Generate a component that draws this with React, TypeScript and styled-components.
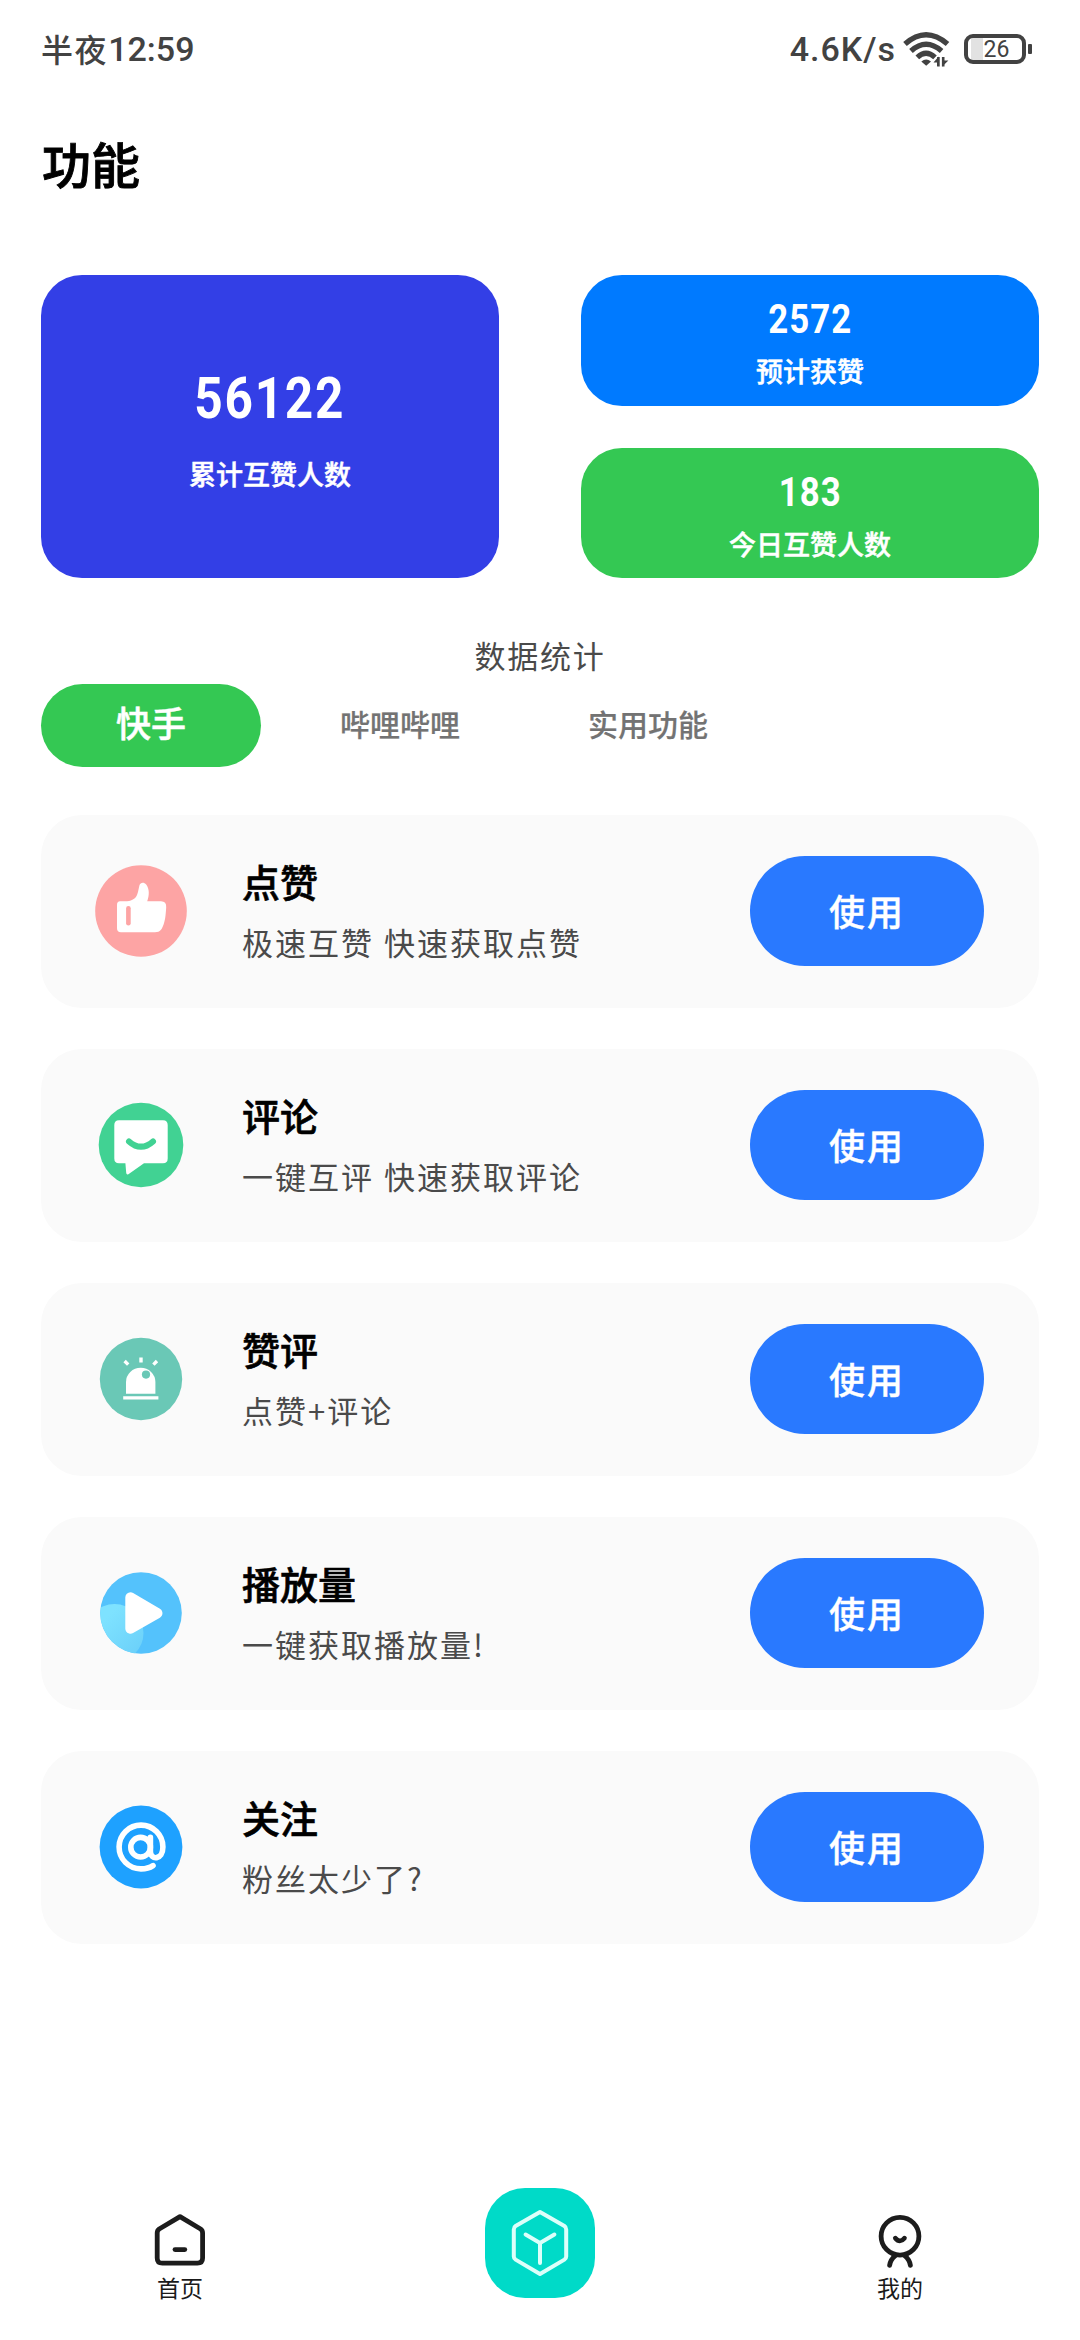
import React from "react";
import styled, { createGlobalStyle } from "styled-components";

const GlobalStyle = createGlobalStyle`
  *, *::before, *::after { box-sizing: border-box; }
  body {
    margin: 0;
    background: #ffffff;
    font-family: "Noto Sans CJK SC", "Noto Sans", sans-serif;
  }
`;

const Screen = styled.main`
  display: flex;
  flex-direction: column;
  width: 1080px;
  height: 2340px;
  overflow: hidden;
  background: #fff;
`;

const StatusBar = styled.header`
  display: flex;
  justify-content: space-between;
  align-items: center;
  height: 98px;
  padding: 0 48px 0 41px;
  color: #424242;
`;

const Clock = styled.div`
  display: flex;
  align-items: center;
  font-size: 32px;
  font-weight: 500;
  line-height: 48px;
  letter-spacing: 1.6px;
`;

const Period = styled.span`
  padding-bottom: 3px;
`;

const Latin = styled.span<{ $size: number; $spacing?: number }>`
  font-family: Roboto, "Noto Sans", sans-serif;
  font-weight: 500;
  font-size: ${(p) => p.$size}px;
  letter-spacing: ${(p) => p.$spacing ?? 0}px;
`;

const StatusIcons = styled.div`
  display: flex;
  align-items: center;
`;

const WifiSvg = styled.svg`
  margin-left: 7px;
`;

const Battery = styled.div`
  display: flex;
  align-items: center;
  margin-left: 14px;
`;

const BatteryBody = styled.div`
  display: flex;
  align-items: center;
  justify-content: center;
  width: 62px;
  height: 30px;
  padding: 1px 0 0 3px;
  border: 4px solid #424242;
  border-radius: 9px;
  background: linear-gradient(90deg, #fff 3px, #e2e2e2 3px, #e2e2e2 15px, #fff 15px);
  font: 400 23px/22px Roboto, "Noto Sans", sans-serif;
`;

const BatteryTip = styled.div`
  width: 4px;
  height: 10px;
  margin-left: 2px;
  border-radius: 1px;
  background: #424242;
`;

const PageTitle = styled.h1`
  margin: 29px 0 0 42px;
  height: 72px;
  font-size: 49px;
  line-height: 72px;
  font-weight: 500;
  -webkit-text-stroke: 0.9px #000;
  color: #000;
`;

const Stats = styled.section`
  display: grid;
  grid-template-columns: 458px 458px;
  grid-template-rows: 131px 130px;
  gap: 42px 82px;
  margin: 76px 41px 0;
`;

const StatCard = styled.div<{ $color: string; $large?: boolean }>`
  display: flex;
  flex-direction: column;
  align-items: center;
  grid-row: ${(p) => (p.$large ? "span 2" : "auto")};
  padding-top: ${(p) => (p.$large ? 93 : 24)}px;
  border-radius: 41px;
  background: ${(p) => p.$color};
  color: #fff;
`;

const StatValue = styled.div<{ $large?: boolean }>`
  height: ${(p) => (p.$large ? 62 : 42)}px;
  font-family: Roboto, "Noto Sans", sans-serif;
  font-weight: 700;
  font-size: ${(p) => (p.$large ? 57 : 40)}px;
  line-height: ${(p) => (p.$large ? 62 : 42)}px;
  letter-spacing: ${(p) => (p.$large ? 2 : 1.2)}px;
  transform: scaleX(0.87);
`;

const StatLabel = styled.div<{ $large?: boolean }>`
  margin-top: ${(p) => (p.$large ? 24 : 10)}px;
  font-size: 27px;
  line-height: 40px;
  font-weight: 500;
  -webkit-text-stroke: 0.5px #fff;
`;

const SectionCaption = styled.p`
  margin: 54px 0 0;
  height: 46px;
  text-align: center;
  font-size: 31px;
  line-height: 46px;
  letter-spacing: 1.7px;
  color: #4a4a4a;
`;

const Tabs = styled.nav`
  display: flex;
  align-items: center;
  height: 83px;
  margin: 6px 0 0 41px;
`;

const Tab = styled.button<{ $active?: boolean }>`
  width: ${(p) => (p.$active ? 220 : 248)}px;
  height: 83px;
  padding: 0 0 ${(p) => (p.$active ? 8 : 6)}px;
  border: 0;
  border-radius: 42px;
  background: ${(p) => (p.$active ? "#34c853" : "transparent")};
  color: ${(p) => (p.$active ? "#fff" : "#737373")};
  font-family: inherit;
  font-weight: 500;
  font-size: ${(p) => (p.$active ? 35 : 30)}px;
  -webkit-text-stroke: ${(p) => (p.$active ? "0.5px" : "0.2px")} currentColor;
  &:nth-child(2) { margin-left: 15px; }
`;

const List = styled.section`
  display: flex;
  flex-direction: column;
  gap: 41px;
  margin: 48px 41px 0;
`;

const Row = styled.article`
  display: flex;
  align-items: center;
  height: 193px;
  padding: 0 55px 1px 54px;
  border-radius: 41px;
  background: #fafafa;
`;

const RowText = styled.div`
  flex: 1;
  margin-left: 55px;
  padding-bottom: 4px;
`;

const RowTitle = styled.h2`
  margin: 0;
  font-size: 38px;
  line-height: 56px;
  font-weight: 500;
  -webkit-text-stroke: 0.6px #000;
  color: #000;
`;

const RowSubtitle = styled.p`
  margin: 10px 0 0;
  font-size: 31px;
  line-height: 46px;
  letter-spacing: 2px;
  word-spacing: 1px;
  color: #4a4a4a;
`;

const UseButton = styled.button`
  width: 234px;
  height: 110px;
  padding: 0 0 2px;
  border: 0;
  border-radius: 55px;
  background: #2979ff;
  color: #fff;
  font-family: inherit;
  font-size: 36px;
  font-weight: 500;
  letter-spacing: 2px;
  -webkit-text-stroke: 0.4px #fff;
`;

const BottomNav = styled.footer`
  display: grid;
  grid-template-columns: 360px 360px 360px;
  justify-items: center;
  align-items: start;
  margin-top: auto;
  height: 152px;
`;

const NavItem = styled.div`
  display: flex;
  flex-direction: column;
  align-items: center;
  gap: 2px;
  padding-top: 24px;
  font-size: 23px;
  line-height: 34px;
  color: #1a1a1a;
`;

const NavCenter = styled.div`
  display: flex;
  align-items: center;
  justify-content: center;
  width: 110px;
  height: 110px;
  border-radius: 40px;
  background: #00dac8;
`;

const IconCanvas = ({ children }: { children: React.ReactNode }) => (
  <svg width="92" height="92" viewBox="-46 -46 92 92">
    {children}
  </svg>
);

const LikeIcon = () => (
  <IconCanvas>
    <circle r="45.8" fill="#fda4a4" />
    <path
      d="M-21-9.7H-14C-8-10.5-5.5-12.5-3.8-16.5C-2.5-20-2.4-22.5-1.6-25.5C-.6-29 3-29.3 5.2-26.4C8.6-22 8.4-15.5 6.2-9.7H20Q25.6-9.7 25.2-3.5C24.6 4 24.5 8 22.6 13.5C21 18 19.5 21.2 14 21.2H-20Q-24 21.2-24 17.2V-6Q-24-9.7-21-9.7Z"
      fill="#fff"
    />
    <path d="M-12.6-2.8V12.2" stroke="#fda4a4" strokeWidth="4.6" strokeLinecap="round" />
  </IconCanvas>
);

const CommentIcon = () => (
  <IconCanvas>
    <circle r="42.3" fill="#41d293" />
    <path
      d="M-22-24.7H22Q26.7-24.7 26.7-20V13.6Q26.7 18.3 22 18.3H3L-12.6 29.2Q-14.6 30-14.8 27.8L-15.6 18.3H-22Q-26.7 18.3-26.7 13.6V-20Q-26.7-24.7-22-24.7Z"
      fill="#fff"
    />
    <path d="M-12-3.6Q0 7 12-3.6" fill="none" stroke="#41d293" strokeWidth="6" strokeLinecap="round" />
  </IconCanvas>
);

const AlarmIcon = () => (
  <IconCanvas>
    <circle r="41.2" fill="#6ac8b6" />
    <path d="M-15 14.8V3A14.7 14.3 0 0 1 14.4 3V14.8Z" fill="#fff" />
    <circle cx="5" cy="-4.4" r="4.1" fill="#6ac8b6" />
    <path d="M-17.8 18.9H17.4" stroke="#fff" strokeWidth="3.2" />
    <path d="M-16.4-18L-12.8-14.4M0-21.6V-16.6M16-18L12.4-14.4" stroke="#fff" strokeWidth="3.4" />
  </IconCanvas>
);

const PlayIcon = () => (
  <IconCanvas>
    <defs>
      <clipPath id="playDisc">
        <circle r="40.8" />
      </clipPath>
      <linearGradient id="playGlow" x1="0" y1="0" x2="1" y2="1">
        <stop offset="0.3" stopColor="#7ee2ff" />
        <stop offset="1" stopColor="#68cdf8" />
      </linearGradient>
    </defs>
    <circle r="40.8" fill="#54c2fc" />
    <circle cx="-26.5" cy="20" r="29" fill="url(#playGlow)" clipPath="url(#playDisc)" />
    <path
      d="M-10.5-15.5L16.3.2L-10.5 15.6Z"
      fill="#fff"
      stroke="#fff"
      strokeWidth="10.4"
      strokeLinejoin="round"
    />
  </IconCanvas>
);

const FollowIcon = () => (
  <IconCanvas>
    <circle r="41.4" fill="#1ea1ff" />
    <g fill="none" stroke="#fff" strokeWidth="5.6" strokeLinecap="round" strokeLinejoin="round">
      <circle cx="-.4" cy=".2" r="9.8" />
      <path d="M9.4-9.6V4.6C9.4 13.4 21.9 13.4 21.9 0A21.9 21.9 0 1 0-.2 21.9Q7 22 12 18.6" />
    </g>
  </IconCanvas>
);

const WifiIcon = () => (
  <WifiSvg width="47" height="36" viewBox="0 0 47 36" fill="none" stroke="#424242">
    <path d="M2 13Q23-5.5 44.5 13" strokeWidth="5.4" />
    <path d="M8 20Q23 6.5 38.6 20" strokeWidth="5.4" />
    <path d="M14.3 26.4Q23 18 32 26.4" strokeWidth="5.2" />
    <path d="M18.3 30.4Q23.2 26.4 28 30.4L23.2 34.8Z" fill="#424242" stroke="none" />
    <path d="M35.6 25.5V35H34V31.5H30.5ZM39.2 35.5V26H40.8V29.4H45.4Z" fill="#424242" stroke="none" />
    <path d="M35.4 26V35.6M40.2 26V35.6" strokeWidth="2.6" />
  </WifiSvg>
);

const HomeIcon = () => (
  <svg width="56" height="56" viewBox="0 0 56 56" fill="none" stroke="#1c1c1c" strokeWidth="4.8" strokeLinecap="round" strokeLinejoin="round">
    <path d="M28 4.6L48.6 17Q50.6 18.4 50.6 21V46Q50.6 51.2 45.4 51.2H10.4Q5.2 51.2 5.2 46V21Q5.2 18.4 7.2 17Z" />
    <path d="M23 37.6H32.8" />
  </svg>
);

const ProfileIcon = () => (
  <svg width="56" height="56" viewBox="0 0 56 56" fill="none" stroke="#1c1c1c" strokeWidth="4.8" strokeLinecap="round">
    <circle cx="28" cy="24.2" r="18.9" />
    <path d="M23.4 26.2Q27.8 31.6 32.4 26.2" />
    <path d="M17.6 53.4Q18.4 47.4 23.4 43.6M38.4 53.4Q37.6 47.4 32.6 43.6" />
  </svg>
);

const CubeIcon = () => (
  <svg width="64" height="72" viewBox="0 0 64 72" fill="none" stroke="#dcfffa" strokeWidth="4" strokeLinecap="round" strokeLinejoin="round">
    <path d="M32 5L56.4 19Q58.2 20.2 58.2 22.4V49.4Q58.2 51.4 56.4 52.6L32 67L7.6 52.6Q5.8 51.4 5.8 49.4V22.4Q5.8 20.2 7.6 19Z" />
    <path d="M17.6 27.6L32 36L46.4 27.6M32 36V56" />
  </svg>
);

const features = [
  { title: "点赞", subtitle: "极速互赞 快速获取点赞", Icon: LikeIcon },
  { title: "评论", subtitle: "一键互评 快速获取评论", Icon: CommentIcon },
  { title: "赞评", subtitle: "点赞+评论", Icon: AlarmIcon },
  { title: "播放量", subtitle: "一键获取播放量!", Icon: PlayIcon },
  { title: "关注", subtitle: "粉丝太少了?", Icon: FollowIcon },
];

export default function App() {
  return (
    <>
      <GlobalStyle />
      <Screen>
        <StatusBar>
          <Clock>
            <Period>半夜</Period>
            <Latin $size={34}>12:59</Latin>
          </Clock>
          <StatusIcons>
            <Latin $size={34} $spacing={1}>4.6K/s</Latin>
            <WifiIcon />
            <Battery>
              <BatteryBody>26</BatteryBody>
              <BatteryTip />
            </Battery>
          </StatusIcons>
        </StatusBar>

        <PageTitle>功能</PageTitle>

        <Stats>
          <StatCard $color="#333fe6" $large>
            <StatValue $large>56122</StatValue>
            <StatLabel $large>累计互赞人数</StatLabel>
          </StatCard>
          <StatCard $color="#007aff">
            <StatValue>2572</StatValue>
            <StatLabel>预计获赞</StatLabel>
          </StatCard>
          <StatCard $color="#34c853">
            <StatValue>183</StatValue>
            <StatLabel>今日互赞人数</StatLabel>
          </StatCard>
        </Stats>

        <SectionCaption>数据统计</SectionCaption>

        <Tabs>
          <Tab $active>快手</Tab>
          <Tab>哔哩哔哩</Tab>
          <Tab>实用功能</Tab>
        </Tabs>

        <List>
          {features.map(({ title, subtitle, Icon }) => (
            <Row key={title}>
              <Icon />
              <RowText>
                <RowTitle>{title}</RowTitle>
                <RowSubtitle>{subtitle}</RowSubtitle>
              </RowText>
              <UseButton>使用</UseButton>
            </Row>
          ))}
        </List>

        <BottomNav>
          <NavItem>
            <HomeIcon />
            首页
          </NavItem>
          <NavCenter>
            <CubeIcon />
          </NavCenter>
          <NavItem>
            <ProfileIcon />
            我的
          </NavItem>
        </BottomNav>
      </Screen>
    </>
  );
}
